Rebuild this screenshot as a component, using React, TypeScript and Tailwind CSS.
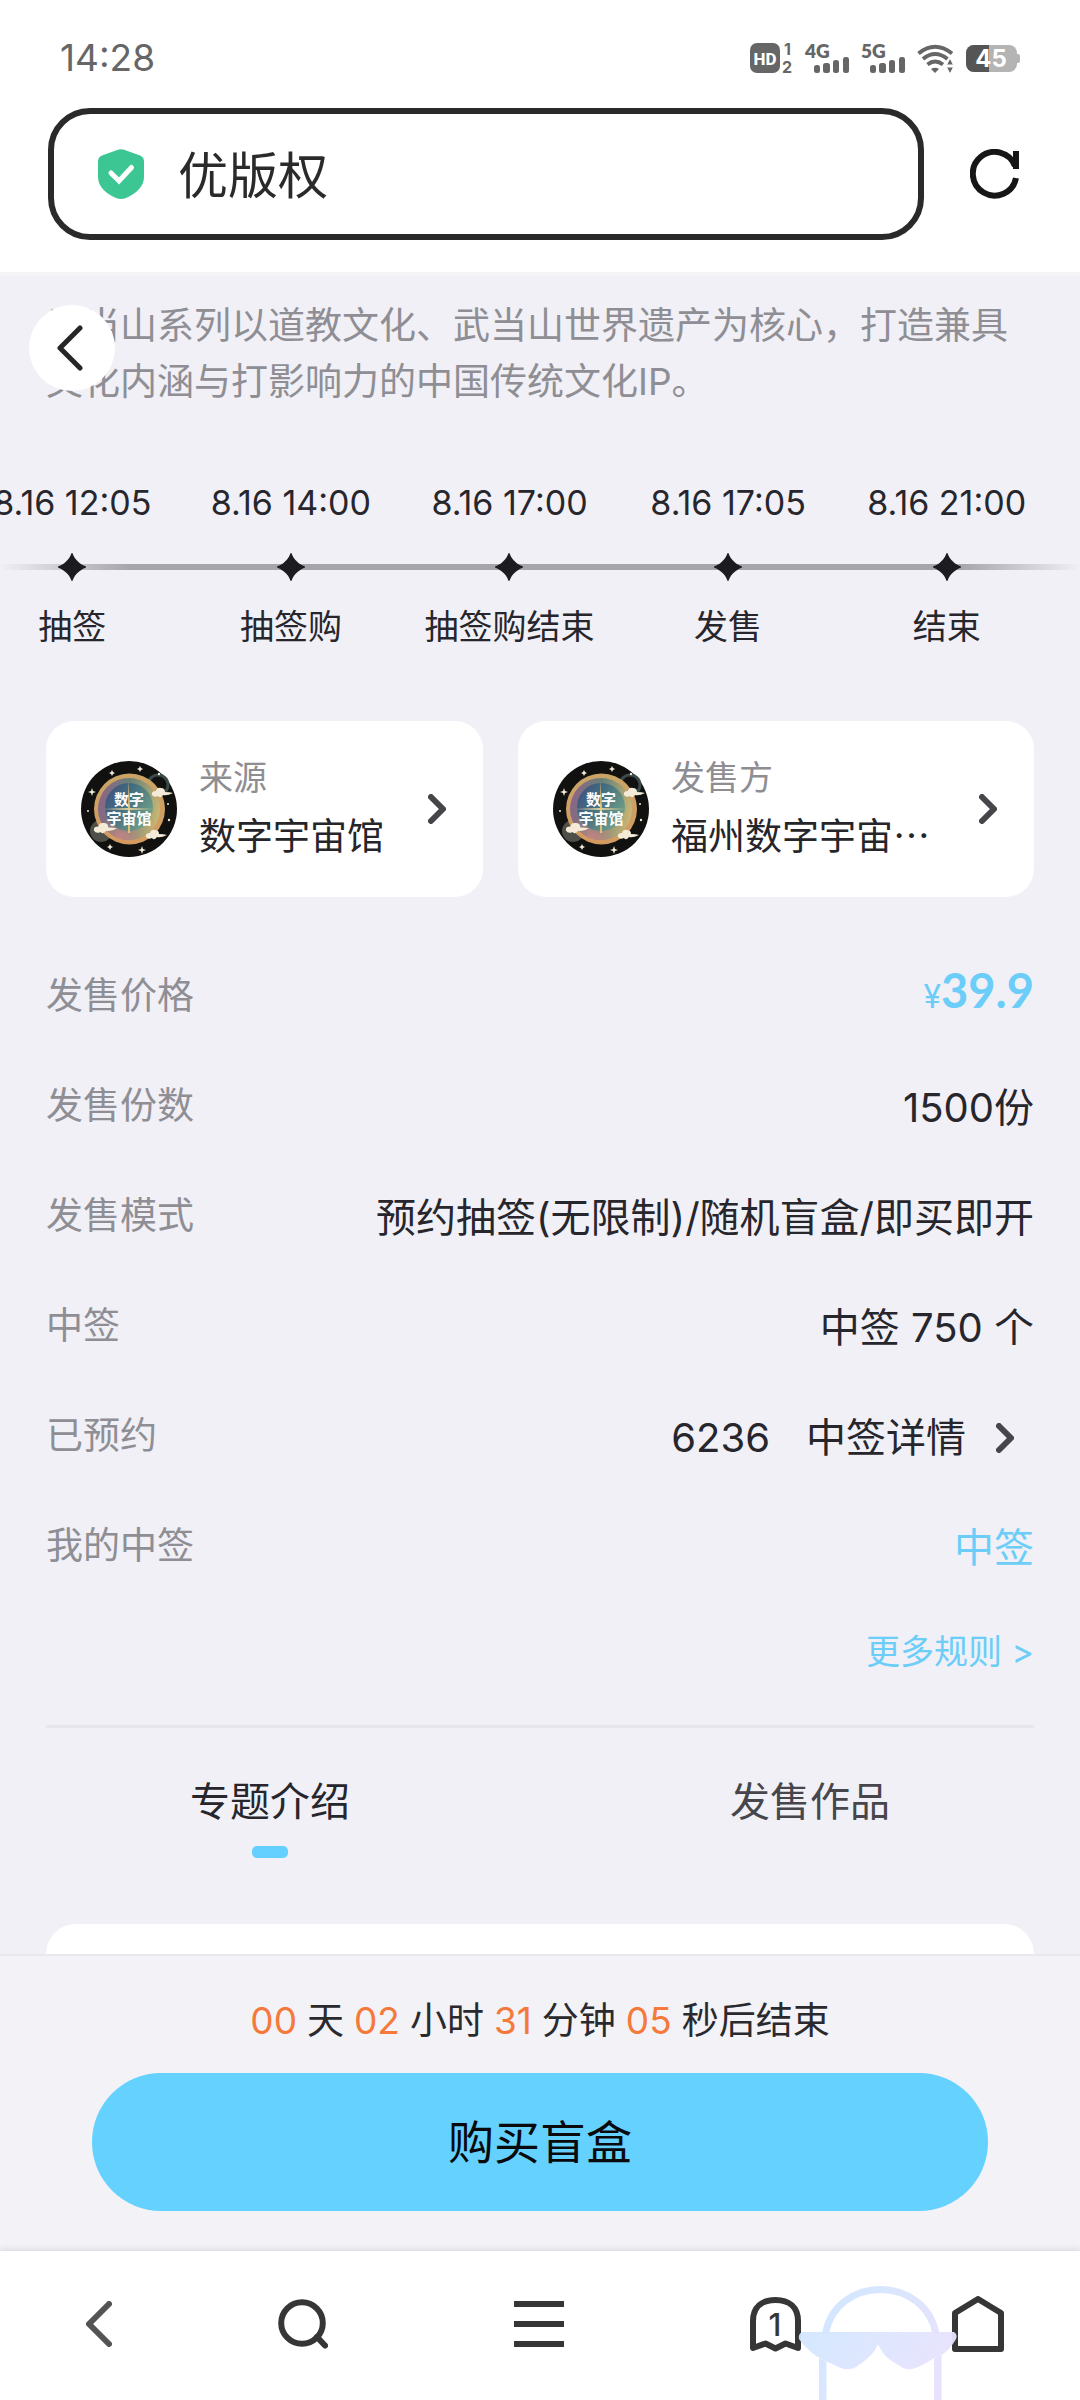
import { useId } from "react";

const milestones = [
  { time: "8.16 12:05", label: "抽签" },
  { time: "8.16 14:00", label: "抽签购" },
  { time: "8.16 17:00", label: "抽签购结束" },
  { time: "8.16 17:05", label: "发售" },
  { time: "8.16 21:00", label: "结束" },
];

const countdown = [
  { value: "00", unit: "天" },
  { value: "02", unit: "小时" },
  { value: "31", unit: "分钟" },
  { value: "05", unit: "秒后结束" },
];

function Signal({ label }: { label: string }) {
  return (
    <svg width="44" height="30" viewBox="0 0 44 30" fill="#666" className="overflow-visible" aria-label={label}>
      <text x="0" y="15" fontSize="19" fontWeight="800" fontFamily="Lato, sans-serif">
        {label}
      </text>
      <rect x="9" y="22" width="6" height="8" rx="2.5" />
      <rect x="18" y="20" width="7" height="10" rx="2.5" />
      <rect x="28" y="17" width="6" height="13" rx="2.5" />
      <rect x="38" y="14" width="6" height="16" rx="2.5" />
    </svg>
  );
}

function StatusBar() {
  return (
    <div className="flex h-[108px] items-center justify-between pt-2 pr-[60px] pl-[60px] text-[#666]">
      <time className="text-[37px]">14:28</time>
      <div className="flex items-center gap-3">
        <svg width="43" height="30" viewBox="0 0 43 30" fill="#666" className="overflow-visible" aria-label="HD">
          <rect width="30" height="30" rx="7" />
          <text x="15" y="21.500" textAnchor="middle" fontSize="17" fontWeight="800" fill="#fff" fontFamily="Roboto, sans-serif">
            HD
          </text>
          <text x="34" y="12" fontSize="16" fontWeight="700" fontFamily="Inter, sans-serif">
            1
          </text>
          <text x="32" y="29.500" fontSize="16" fontWeight="700" fontFamily="Inter, sans-serif">
            2
          </text>
        </svg>
        <Signal label="4G" />
        <Signal label="5G" />
        <svg width="37" height="30" viewBox="0 0 37 30" fill="none" stroke="#666" strokeWidth="4" aria-label="Wi-Fi">
          <path d="M1.500 10.500 Q18 -3 35 10.500" />
          <path d="M6 16 Q18 6 30.500 16" />
          <path d="M10.500 21.500 Q18 15.500 26 21.500" />
          <path d="M14 26 Q18 23.500 22 26 L18 30Z" fill="#666" stroke="none" />
          <path d="M33 15 L36.500 22 H29.500Z M33 31 L36.500 24 H29.500Z" fill="#666" stroke="#fff" strokeWidth="1" />
        </svg>
        <svg width="54" height="27" viewBox="0 0 54 27" aria-label="45%">
          <rect width="51" height="27" rx="8" fill="#b4b4b4" />
          <path d="M8 0 H23 V27 H8 A8 8 0 0 1 0 19 V8 A8 8 0 0 1 8 0Z" fill="#555" />
          <path d="M51 9 H52 Q54 9 54 11 V16 Q54 18 52 18 H51Z" fill="#b4b4b4" />
          <text x="25" y="22" textAnchor="middle" fontSize="24" fontWeight="700" fill="#fff" fontFamily="Inter, sans-serif">
            45
          </text>
        </svg>
      </div>
    </div>
  );
}

function AddressBar() {
  return (
    <div className="flex items-center gap-[46px] pr-[60px] pb-8 pl-12">
      <label className="flex h-[132px] min-w-0 flex-1 items-center gap-[34px] rounded-[42px] border-6 border-[#2a2a2a] pr-8 pl-11">
        <svg width="46" height="50" viewBox="0 0 46 50" className="shrink-0" aria-hidden="true">
          <path
            d="M18.500 1.200 Q23 -.8 27.500 1.200 L42 6.500 Q46 8.200 46 12.500 V28 C46 38 38 44.500 28 49 Q23 51 18 49 C8 44.500 0 38 0 28 V12.500 Q0 8.200 4 6.500Z"
            fill="#3cc693"
          />
          <path d="M13 24 L21 32 L33.500 18.500" fill="none" stroke="#fff" strokeWidth="5" strokeLinecap="round" />
        </svg>
        <input
          aria-label="地址栏"
          defaultValue="优版权"
          className="min-w-0 flex-1 bg-transparent pt-1 text-[50px] text-[#2a2a2a] outline-none"
        />
      </label>
      <button aria-label="刷新">
        <svg width="50" height="50" viewBox="0 0 50 50" fill="none" stroke="#161616" strokeWidth="6">
          <path d="M46 29 A21.800 21.800 0 1 1 45 17" />
          <path d="M46 2 V20" />
        </svg>
      </button>
    </div>
  );
}

function Star() {
  return (
    <svg width="28" height="28" viewBox="0 0 28 28" className="mt-[26px]" aria-hidden="true">
      <path d="M14 -1 Q16.500 6 20 8.500 Q22 11 29 14 Q22 17 20 19.500 Q16.500 22 14 29 Q11.500 22 8 19.500 Q6 17 -1 14 Q6 11 8 8.500 Q11.500 6 14 -1Z" fill="#1c1c20" />
    </svg>
  );
}

function Timeline() {
  return (
    <section className="relative mt-[69px] overflow-hidden">
      <div
        aria-hidden="true"
        className="absolute inset-x-0 top-[85px] h-1.5 bg-linear-to-r from-transparent from-0% via-[#a6a5ac] via-12% to-[#a6a5ac] to-89% mask-r-from-89% mask-r-to-100%"
      />
      <ol className="relative -ml-[37px] mr-6 grid grid-cols-5 text-[34px] leading-12 whitespace-nowrap text-[#26262c]">
        {milestones.map((m) => (
          <li key={m.time} className="flex flex-col items-center">
            <time>{m.time}</time>
            <Star />
            <span className="mt-[22px]">{m.label}</span>
          </li>
        ))}
      </ol>
    </section>
  );
}

function Chevron() {
  return (
    <svg width="18" height="30" viewBox="0 0 18 30" className="shrink-0" aria-hidden="true">
      <path d="M3 3 L15 15 L3 27" fill="none" stroke="#46464a" strokeWidth="6" strokeLinecap="round" strokeLinejoin="round" />
    </svg>
  );
}

function Avatar() {
  const id = useId();
  const cloud = "M0 8 Q-1 4 4 4 Q5 0 9 1 Q13 1 13 5 Q18 5 21 6 Q15 9 11 8 Q8 12 6 9 Q2 11 0 8Z";
  return (
    <svg width="96" height="96" viewBox="0 0 96 96" className="shrink-0" aria-hidden="true">
      <defs>
        <linearGradient id={`${id}o`} x1="0" y1="0.300" x2="1" y2="0.500">
          <stop offset="0" stopColor="#8e6488" />
          <stop offset="0.450" stopColor="#668078" />
          <stop offset="1" stopColor="#c9b574" />
        </linearGradient>
        <radialGradient id={`${id}s`} cx="0.350" cy="0.980" r="0.400">
          <stop offset="0" stopColor="#c98484" />
          <stop offset="1" stopColor="#c98484" stopOpacity="0" />
        </radialGradient>
        <linearGradient id={`${id}i`} x1="0" y1="0" x2="1" y2="0.700">
          <stop offset="0" stopColor="#33487c" />
          <stop offset="0.450" stopColor="#3c6b82" />
          <stop offset="1" stopColor="#68a28a" />
        </linearGradient>
        <linearGradient id={`${id}r`} x1="0" y1="0" x2="0" y2="1">
          <stop offset="0" stopColor="#c9a465" />
          <stop offset="1" stopColor="#d39a60" />
        </linearGradient>
      </defs>
      <circle cx="48" cy="48" r="48" fill="#11110f" />
      <circle cx="77" cy="24" r="10" fill="none" stroke="#3b4a4a" strokeWidth="3" />
      <circle cx="20" cy="70" r="11" fill="#4d4f48" />
      <circle cx="48.500" cy="48" r="35.500" fill={`url(#${id}r)`} />
      <circle cx="48" cy="48" r="31" fill={`url(#${id}o)`} />
      <circle cx="48" cy="48" r="31" fill={`url(#${id}s)`} />
      <circle cx="48" cy="46" r="24" fill={`url(#${id}i)`} opacity="0.850" />
      <path d="M47.500 20 L49 46 L49 72 L47 72 L47 46Z" fill="#e0bd74" />
      <path d="M22 48 L48 47 L72 48 L48 49Z" fill="#e0cf9a" />
      <g fill="#f4ead8">
        <path transform="translate(71 26)" d={cloud} />
        <path transform="translate(13 61) scale(1.100)" d={cloud} />
        <path transform="translate(65 68)" d={cloud} />
        <path d="M11 27 l1 3 3 1 -3 1 -1 3 -1 -3 -3 -1 3 -1Z M61 85 l1 3 3 1 -3 1 -1 3 -1 -3 -3 -1 3 -1Z M59 5 l1 2 2 1 -2 1 -1 2 -1 -2 -2 -1 2 -1Z M31 9 l1 2 2 1 -2 1 -1 2 -1 -2 -2 -1 2 -1Z M29 83 l1 2 2 1 -2 1 -1 2 -1 -2 -2 -1 2 -1Z" />
        <circle cx="88" cy="59" r="1.200" />
        <circle cx="78" cy="13" r="1.200" />
        <circle cx="7" cy="50" r="1" />
        <circle cx="87" cy="43" r="1" />
      </g>
      <text fill="#fff" fontWeight="700" fontSize="15" textAnchor="middle" fontFamily="'Noto Sans CJK SC', sans-serif">
        <tspan x="48" y="44">数字</tspan>
        <tspan x="48" y="63">宇宙馆</tspan>
      </text>
    </svg>
  );
}

function PartyCard({ role, name }: { role: string; name: string }) {
  return (
    <a href="#" className="flex h-44 min-w-0 items-center gap-[22px] rounded-[28px] bg-white pr-[37px] pl-[35px]">
      <Avatar />
      <span className="flex min-w-0 flex-1 flex-col pb-1.5 leading-14 whitespace-nowrap">
        <span className="text-[34px] text-[#8e8e92]">{role}</span>
        <span className="font-['Noto_Sans_CJK_SC',sans-serif] text-[37px] text-[#26262a]">{name}</span>
      </span>
      <Chevron />
    </a>
  );
}

function Row({ label, children }: { label: string; children: React.ReactNode }) {
  return (
    <div className="flex h-[110px] items-center justify-between">
      <dt className="text-[37px] text-[#8e8e94]">{label}</dt>
      <dd className="pt-1 text-[40px] text-[#26262c]">{children}</dd>
    </div>
  );
}

function Mascot() {
  return (
    <svg
      width="160"
      height="114"
      viewBox="0 0 160 114"
      className="pointer-events-none absolute right-[122px] bottom-0"
      aria-hidden="true"
    >
      <defs>
        <linearGradient id="mascot" gradientUnits="userSpaceOnUse" x1="30" y1="20" x2="140" y2="90">
          <stop offset="0" stopColor="#d3e7ff" />
          <stop offset="0.500" stopColor="#dde5fe" />
          <stop offset="1" stopColor="#e8e2fd" />
        </linearGradient>
      </defs>
      <path d="M27.500 48 C32 20 56 3.500 82.500 3.500 S133 20 138 48" fill="none" stroke="url(#mascot)" strokeWidth="7" />
      <path
        d="M4 46 H156 Q160 49 158 53 C153 62 146 69 137 72 C129 76 123 81 114 83 Q107 84 102 80 C92 75 85 69 81 60 Q80 58 79 60 C75 69 67 75 58 81 Q53 84 46 83 C39 81 33 77 27 75 C17 70 7 62 1 53 Q0 48 4 46Z"
        fill="url(#mascot)"
        opacity="0.950"
      />
      <path d="M21 72 L28.500 76 V114 H21Z M136 73 L143.500 68 V114 H136Z" fill="url(#mascot)" />
    </svg>
  );
}

function BrowserNav() {
  return (
    <nav className="relative grid h-[149px] grid-cols-[198fr_210fr_262fr_210fr_200fr] bg-white pb-[3px] shadow-[0_-1px_7px_rgba(0,0,0,0.12)]">
      <button aria-label="后退" className="grid place-items-center">
        <svg width="26" height="46" viewBox="0 0 26 46" fill="none" stroke="#545454" strokeWidth="6" strokeLinecap="round" strokeLinejoin="round">
          <path d="M23 3 L3 23 L23 43" />
        </svg>
      </button>
      <button aria-label="搜索" className="grid place-items-center">
        <svg width="50" height="50" viewBox="0 0 50 50" fill="none" stroke="#363636" strokeWidth="6">
          <circle cx="24" cy="24" r="20.800" />
          <path d="M39 38 L47 46.500" strokeWidth="6" strokeLinecap="round" />
        </svg>
      </button>
      <button aria-label="菜单" className="grid place-items-center">
        <svg width="50" height="46" viewBox="0 0 50 46" fill="#363636">
          <path d="M0 0 H50 V6 H0Z M0 20 H50 V26 H0Z M0 40 H50 V46 H0Z" />
        </svg>
      </button>
      <button aria-label="窗口" className="grid place-items-center">
        <svg
          width="51"
          height="55"
          viewBox="0 0 51 55"
          fill="none"
          stroke="#363636"
          strokeWidth="6"
          strokeLinejoin="round"
          className="[grid-area:1/1]"
        >
          <path d="M3 51 V24 C3 10 12 3 25.500 3 S48 10 48 24 V51 L35.500 46.500 L25.500 51.500 L15.500 46.500Z" />
        </svg>
        <span className="text-[31px] leading-none font-medium text-[#363636] [grid-area:1/1]">1</span>
      </button>
      <button aria-label="主页" className="grid place-items-center pr-1">
        <svg width="52" height="56" viewBox="0 0 52 56" fill="none" stroke="#363636" strokeWidth="6" strokeLinejoin="round">
          <path d="M3 53 V17 L26 3 L49 17 V53Z" />
        </svg>
      </button>
      <Mascot />
    </nav>
  );
}

export default function App() {
  return (
    <div
      lang="zh-CN"
      className="flex min-h-screen flex-col overflow-x-hidden bg-[#f0f0f6] font-[Inter,'Noto_Sans_CJK_SC',sans-serif]"
    >
      <header className="bg-white">
        <StatusBar />
        <AddressBar />
      </header>

      <main className="relative flex flex-1 flex-col border-t-4 border-[#f4f4f6] pt-[22px]">
        <p className="px-[46px] text-[37px] leading-14 text-[#8e8e94]">
          武当山系列以道教文化、武当山世界遗产为核心，打造兼具文化内涵与打影响力的中国传统文化IP。
        </p>
        <button
          aria-label="返回"
          className="absolute top-[29px] left-[29px] grid size-[86px] place-items-center rounded-full bg-white pr-1"
        >
          <svg width="26" height="46" viewBox="0 0 26 46" fill="none" stroke="#262626" strokeWidth="5" strokeLinecap="round" strokeLinejoin="round">
            <path d="M23 3 L3 23 L23 43" />
          </svg>
        </button>

        <Timeline />

        <div className="mt-[70px] flex flex-1 flex-col px-[46px]">
          <div className="grid grid-cols-[437fr_516fr] gap-[35px]">
            <PartyCard role="来源" name="数字宇宙馆" />
            <PartyCard role="发售方" name="福州数字宇宙…" />
          </div>

          <dl className="mt-11">
            <Row label="发售价格">
              <span className="flex items-baseline pb-2 text-[#6bcdf8]">
                <span className="text-[32px]">¥</span>
                <span className="font-[Lato,sans-serif] text-[47px] leading-none font-bold">39.9</span>
              </span>
            </Row>
            <Row label="发售份数">1500份</Row>
            <Row label="发售模式">预约抽签(无限制)/随机盲盒/即买即开</Row>
            <Row label="中签">中签 750 个</Row>
            <Row label="已预约">
              <span className="flex items-center">
                6236
                <a href="#" className="ml-9 flex items-center gap-[30px] pr-5">
                  中签详情
                  <Chevron />
                </a>
              </span>
            </Row>
            <Row label="我的中签">
              <span className="text-[#6bcdf8]">中签</span>
            </Row>
          </dl>
          <a href="#" className="flex h-[100px] items-center self-end text-[34px] text-[#6bcdf8]">
            更多规则 &gt;
          </a>

          <div className="mt-6 h-[3px] shrink-0 bg-[#e6e6eb]" />

          <div role="tablist" className="-mx-[46px] grid grid-cols-2 items-start pt-[46px] text-[40px] leading-14">
            <button role="tab" aria-selected="true" className="flex flex-col items-center gap-4 text-[#26262c]">
              专题介绍
              <span className="h-3 w-9 rounded-[5px] bg-[#64d0ff]" />
            </button>
            <button role="tab" aria-selected="false" className="text-[#46464c]">
              发售作品
            </button>
          </div>

          <div className="mt-[66px] min-h-7 flex-1 rounded-t-[36px] bg-white" />
        </div>
      </main>

      <footer className="sticky bottom-0">
        <section className="border-t-2 border-[#e8e8ed] bg-[#f2f2f7] px-[92px] pb-10">
          <p className="flex h-[117px] items-center justify-center gap-[10px] pt-3 text-[37px] whitespace-nowrap text-[#2a2a2e]">
            {countdown.map((c) => (
              <span key={c.unit} className="flex gap-[10px]">
                <span className="text-[#f5793b]">{c.value}</span>
                {c.unit}
              </span>
            ))}
          </p>
          <button className="h-[138px] w-full rounded-full bg-[#64d1ff] text-[46px] text-[#0a0a0c]">购买盲盒</button>
        </section>
        <BrowserNav />
      </footer>
    </div>
  );
}
